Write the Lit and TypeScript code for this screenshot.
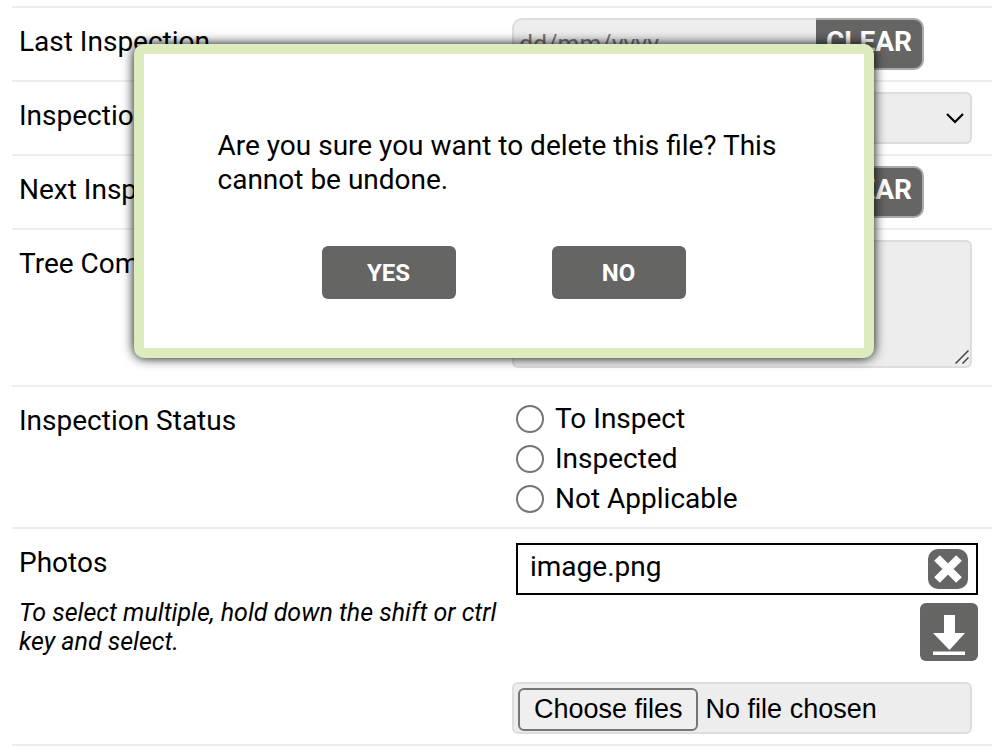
import { LitElement, html, css } from "lit";
import { customElement, state } from "lit/decorators.js";

@customElement("app-root")
export class AppRoot extends LitElement {
  @state() private open = true;

  static styles = css`
    :host {
      display: block;
      position: relative;
      background: #fff;
      color: #000;
      font-family: Roboto, "Liberation Sans", sans-serif;
      font-size: 28px;
      line-height: 34px;
    }
    * { box-sizing: border-box; }
    button, input, select, textarea { font: inherit; margin: 0; }
    .form { padding: 6px 15px 0 12px; overflow: hidden; }
    .row {
      display: grid;
      grid-template-columns: 1fr 1fr;
      border-top: 2px solid #ededed;
    }
    .last { border-bottom: 2px solid #ededed; }
    .name { padding: 17px 0 0 7px; }
    .name p { margin: 0; }
    .name .note { font-size: 25px; line-height: 29px; font-style: italic; padding-top: 18px; }
    .value { padding: 10px 20px 10px 10px; }
    .field {
      display: block;
      width: 100%;
      height: 52px;
      border: 2px solid #ddd;
      border-radius: 6px;
      background: #ededed;
      color: #000;
      padding: 0 5px;
    }
    .date { display: flex; }
    .date input { width: 304px; border-right: 0; border-radius: 10px 0 0 10px; font-size: 25px; }
    .date input::placeholder { color: #757575; opacity: 1; }
    .clear {
      height: 52px;
      width: 108px;
      padding: 0 0 4px;
      border: 2px solid #aaa;
      border-left: 0;
      border-radius: 0 10px 10px 0;
      background: #656563;
      color: #fff;
      font-weight: 700;
    }
    .overlay { display: grid; align-items: center; }
    .overlay .field, .overlay svg { grid-area: 1 / 1; }
    .overlay select { appearance: none; }
    .overlay svg { justify-self: end; pointer-events: none; }
    .chevron { margin-right: 7px; }
    .grip { align-self: end; margin: 0 3px 4px 0; }
    .comments { padding-bottom: 17px; }
    textarea.field { height: 128px; resize: none; }
    .radio { display: flex; align-items: center; gap: 11px; height: 40px; padding: 3px 0 0 4px; }
    .radio input {
      appearance: none;
      width: 28px;
      height: 28px;
      border: 2px solid #757575;
      border-radius: 50%;
      background: #fff;
    }
    .files { display: flex; flex-direction: column; gap: 8px; align-items: flex-end; padding: 4px 0 21px 4px; margin-right: -6px; }
    .file {
      display: flex;
      justify-content: space-between;
      align-items: center;
      width: 100%;
      height: 52px;
      border: 2px solid #000;
      padding: 0 8px 0 12px;
    }
    .file span { padding-bottom: 4px; }
    .icon { display: block; padding: 0; border: 0; background: #656563; }
    .icon svg { display: block; }
    .remove { border-radius: 10px; }
    .download { border-radius: 6px; }
    .picker { position: relative; display: flex; align-items: center; gap: 8px; padding: 2px 4px 0; font-family: "Liberation Sans", Arial, sans-serif; font-size: 27px; }
    .picker input { position: absolute; inset: 0; width: 100%; opacity: 0; }
    .choose { border: 2px solid #767676; border-radius: 6px; height: 43px; line-height: 38px; padding: 0 13px 0 14px; background: #efefef; }
    .dialog {
      position: absolute;
      top: 44px;
      left: 0;
      right: 0;
      margin: 0 auto;
      width: 740px;
      max-width: 100%;
      border: 10px solid #ddecbf;
      border-radius: 10px;
      background: #fff;
      color: #000;
      padding: 75px 74px 49px;
      box-shadow: 0 0 12px #000;
    }
    .dialog p { margin: 0; }
    .actions { display: flex; justify-content: center; gap: 96px; padding-top: 49px; }
    .actions button {
      width: 134px;
      height: 53px;
      border: 0;
      border-radius: 6px;
      background: #656563;
      color: #fff;
      font-size: 24px;
      font-weight: 700;
    }
  `;

  private dateRow(id: string, label: string) {
    return html`
      <div class="row">
        <div class="name"><label for=${id}>${label}</label></div>
        <div class="value date">
          <input class="field" id=${id} type="text" placeholder="dd/mm/yyyy" />
          <button class="clear" type="button">CLEAR</button>
        </div>
      </div>
    `;
  }

  private close = () => { this.open = false; };

  render() {
    return html`
      <form class="form">
        ${this.dateRow("last", "Last Inspection")}
        <div class="row">
          <div class="name"><label for="type">Inspection</label></div>
          <div class="value overlay">
            <select class="field" id="type"><option></option></select>
            <svg class="chevron" width="20" height="14" viewBox="0 0 20 14" fill="none" stroke="#000" stroke-width="2.2" aria-hidden="true">
              <path d="M2 3l8 8 8-8" />
            </svg>
          </div>
        </div>
        ${this.dateRow("next", "Next Inspection")}
        <div class="row">
          <div class="name"><label for="comments">Tree Comments</label></div>
          <div class="value overlay comments">
            <textarea class="field" id="comments"></textarea>
            <svg class="grip" width="14" height="14" viewBox="0 0 14 14" stroke="#444" stroke-width="1.5" aria-hidden="true">
              <path d="M0.500 13.500L13.500 0.500M7.500 13.500L13.500 7.500" />
            </svg>
          </div>
        </div>
        <div class="row" role="radiogroup" aria-labelledby="status">
          <div class="name" id="status">Inspection Status</div>
          <div class="value">
            ${["To Inspect", "Inspected", "Not Applicable"].map(
              (s) => html`<label class="radio"><input type="radio" name="status" value=${s} />${s}</label>`
            )}
          </div>
        </div>
        <div class="row last">
          <div class="name">
            <label for="photos">Photos</label>
            <p class="note">To select multiple, hold down the shift or ctrl key and select.</p>
          </div>
          <div class="value">
            <div class="files">
              <div class="file">
                <span>image.png</span>
                <button class="icon remove" type="button" aria-label="Delete image.png">
                  <svg width="40" height="40" viewBox="0 0 40 40" stroke="#fff" stroke-width="8">
                    <path d="M9 9L31 31M31 9L9 31" />
                  </svg>
                </button>
              </div>
              <button class="icon download" type="button" aria-label="Download image.png">
                <svg width="58" height="58" viewBox="0 0 58 58" fill="#fff">
                  <path d="M24 12h11v18h10L29.500 47 13 30h11zM13 48.500h32v3.500H13z" />
                </svg>
              </button>
            </div>
            <label class="field picker">
              <span class="choose">Choose files</span>
              <span>No file chosen</span>
              <input id="photos" type="file" multiple />
            </label>
          </div>
        </div>
      </form>
      ${this.open
        ? html`<div class="dialog" role="alertdialog" aria-modal="true" aria-labelledby="question">
            <p id="question">Are you sure you want to delete this file? This cannot be undone.</p>
            <div class="actions">
              <button type="button" @click=${this.close}>YES</button>
              <button type="button" @click=${this.close}>NO</button>
            </div>
          </div>`
        : null}
    `;
  }
}
